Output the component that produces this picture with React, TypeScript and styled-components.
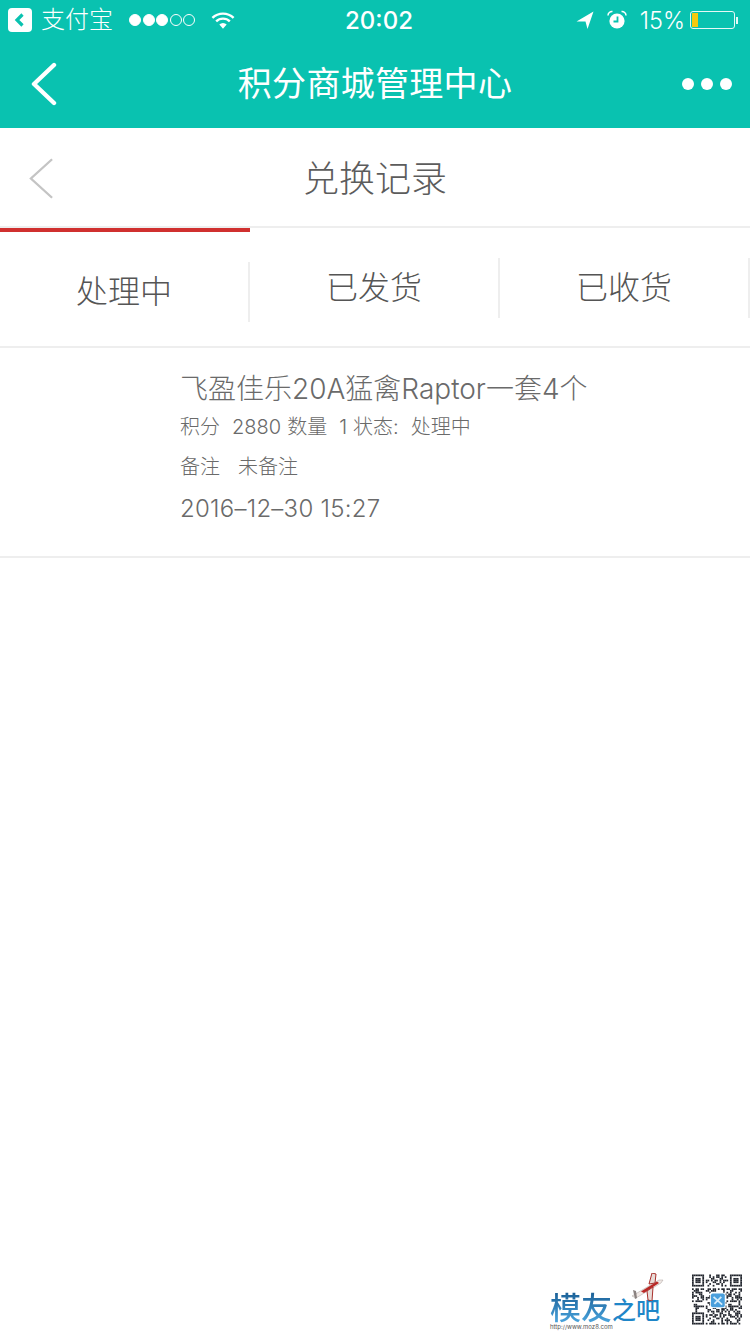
import React from "react";
import styled, { createGlobalStyle } from "styled-components";

const FONT = `Inter, "Noto Sans CJK SC", sans-serif`;

const QR_SIZE = 29;

// finder squares sit in three corners, the rest is pseudo random noise
const qrCell = (x: number, y: number) => {
    const inFinder = (ox: number, oy: number) => x >= ox && x < ox + 7 && y >= oy && y < oy + 7;
    const finderOn = (ox: number, oy: number) => {
        const dx = x - ox;
        const dy = y - oy;
        return dx === 0 || dx === 6 || dy === 0 || dy === 6 || (dx >= 2 && dx <= 4 && dy >= 2 && dy <= 4);
    };
    if (inFinder(0, 0)) return finderOn(0, 0);
    if (inFinder(QR_SIZE - 7, 0)) return finderOn(QR_SIZE - 7, 0);
    if (inFinder(0, QR_SIZE - 7)) return finderOn(0, QR_SIZE - 7);
    if (x === 7 || y === 7 || x === QR_SIZE - 8) {
        if (y < 8 || x < 8) return false;
    }
    return (x * 7 + y * 13 + ((x * y) % 5) * 11 + ((x ^ y) % 3)) % 5 < 2;
};

const QrCode = () => {
    const cells: React.ReactNode[] = [];
    for (let y = 0; y < QR_SIZE; y++) {
        for (let x = 0; x < QR_SIZE; x++) {
            if (qrCell(x, y)) cells.push(<rect key={x + "-" + y} x={x} y={y} width={1} height={1} fill="#20242c" />);
        }
    }
    return (
        <QrSvg viewBox={`0 0 ${QR_SIZE} ${QR_SIZE}`}>
            {cells}
            <rect x="10.5" y="10.5" width="9" height="9" fill="#fff" />
            <rect x="11" y="11" width="8" height="8" rx="1" fill="#4a9fdc" />
            <path d="M12.5 13 L17.5 17.5 M13 17 L17 13" stroke="#d6ecfa" strokeWidth="1" />
        </QrSvg>
    );
};

const Plane = () => (
    <PlaneSvg viewBox="0 0 32 28">
        <path d="M0 23 L27 7 L31 7 L29 10 L4 25 Z" fill="#f1e9e6" stroke="#a8a09c" strokeWidth="0.5" />
        <path d="M9 18.5 L25 8.5 L27 10 L12 20 Z" fill="#b92826" />
        <path d="M17 11 L20 0 L24 1 L23 10 Z" fill="#e8dcd8" stroke="#a8302c" strokeWidth="1" />
        <path d="M15 18 L16 27 L20 28 L21 14 Z" fill="#e8dcd8" stroke="#a8302c" strokeWidth="1" />
        <path d="M1 17 L3 26 L5 25 L4 18 Z" fill="#8a8280" />
    </PlaneSvg>
);

const tabs = ["处理中", "已发货", "已收货"];

export default function App() {
    return (
        <Page>
            <GlobalStyle />
            <TealHeader>
                <StatusBar>
                    <StatusLeft>
                        <BackBadge>
                            <svg width="24" height="24" viewBox="0 0 24 24">
                                <path d="M14.5 6.5 L9 12 L14.5 17.5" fill="none" stroke="#09c2b0" strokeWidth="3.2" />
                            </svg>
                        </BackBadge>
                        <CarrierName>支付宝</CarrierName>
                        <SignalDots>
                            {[1, 2, 3, 4, 5].map((n) => (
                                <SignalDot key={n} $on={n <= 3} />
                            ))}
                        </SignalDots>
                        <WifiIcon viewBox="0 0 26 20">
                            <path d="M1.5 7.2 A16.5 16.5 0 0 1 24.5 7.2" fill="none" stroke="#fff" strokeWidth="2.6" />
                            <path d="M5.6 11 A10.6 10.6 0 0 1 20.4 11" fill="none" stroke="#fff" strokeWidth="2.6" />
                            <path d="M9 14.4 A5.6 5.6 0 0 1 17 14.4 L13 19 Z" fill="#fff" />
                        </WifiIcon>
                    </StatusLeft>
                    <StatusTime>20:02</StatusTime>
                    <StatusRight>
                        <svg width="18" height="18" viewBox="0 0 18 18">
                            <path d="M17.5 0.5 L0.5 10.5 L9.5 10.5 L11.5 18 Z" fill="#fff" />
                        </svg>
                        <AlarmIcon viewBox="0 0 20 20">
                            <circle cx="10" cy="11" r="7.6" fill="#fff" />
                            <path d="M10.5 6.5 V11.5 H6.5" fill="none" stroke="#09c2b0" strokeWidth="1.8" />
                            <path d="M1 5.5 A4 4 0 0 1 5.5 1.5 M14.5 1.5 A4 4 0 0 1 19 5.5" fill="none" stroke="#fff" strokeWidth="1.5" />
                        </AlarmIcon>
                        <BatteryText>15%</BatteryText>
                        <Battery>
                            <BatteryLevel style={{ width: `${Math.round(15 * 0.42)}px` }} />
                        </Battery>
                        <BatteryTip />
                    </StatusRight>
                </StatusBar>
                <NavBar>
                    <NavBack viewBox="0 0 28 44">
                        <path d="M24 3 L4 22 L24 41" fill="none" stroke="#fff" strokeWidth="4.4" strokeLinecap="round" strokeLinejoin="round" />
                    </NavBack>
                    <NavTitle>积分商城管理中心</NavTitle>
                    <MoreDots>
                        <MoreDot />
                        <MoreDot />
                        <MoreDot />
                    </MoreDots>
                </NavBar>
            </TealHeader>

            <PageHeader>
                <PageBack viewBox="0 0 26 44">
                    <path d="M24 2 L2 22 L24 42" fill="none" stroke="#c4c4c4" strokeWidth="2.4" />
                </PageBack>
                <PageTitle>兑换记录</PageTitle>
            </PageHeader>

            <TabBar>
                {tabs.map((label, index) => (
                    <Tab key={label} $active={index === 0}>
                        {label}
                    </Tab>
                ))}
            </TabBar>

            <OrderRow>
                <OrderTitle>飞盈佳乐20A猛禽Raptor一套4个</OrderTitle>
                <OrderMeta>积分&nbsp; 2880 数量&nbsp; 1 状态:&nbsp; 处理中</OrderMeta>
                <OrderNote>备注&nbsp;&nbsp; 未备注</OrderNote>
                <OrderDate>2016–12–30 15:27</OrderDate>
            </OrderRow>

            <Watermark>
                <LogoBlock>
                    <Plane />
                    <LogoWords>
                        <LogoName>模友</LogoName>
                        <LogoSuffix>之吧</LogoSuffix>
                    </LogoWords>
                    <LogoUrl>http://www.moz8.com</LogoUrl>
                </LogoBlock>
                <QrCode />
            </Watermark>
        </Page>
    );
}

//style

const GlobalStyle = createGlobalStyle`
    html, body {
        margin: 0;
        padding: 0;
        background: #fff;
    }
`;

const Page = styled.div`
    position: relative;
    width: 750px;
    height: 1334px;
    overflow: hidden;
    background: #fff;
    font-family: ${FONT};
`;

const TealHeader = styled.header`
    height: 128px;
    background-color: #09c2b0;
    color: #fff;
`;

const StatusBar = styled.div`
    position: relative;
    height: 40px;
    display: flex;
    align-items: center;
    justify-content: space-between;
    padding: 0 12px 0 8px;
`;

const StatusLeft = styled.div`
    display: flex;
    align-items: center;
`;

const BackBadge = styled.div`
    width: 24px;
    height: 24px;
    border-radius: 4px;
    background: #fff;
    display: flex;
`;

const CarrierName = styled.span`
    margin-left: 9px;
    font-size: 24px;
    font-weight: 300;
    line-height: 30px;
`;

const SignalDots = styled.div`
    display: flex;
    gap: 1.5px;
    margin-left: 16px;
`;

const SignalDot = styled.i<{ $on: boolean }>`
    display: block;
    box-sizing: border-box;
    width: 12px;
    height: 12px;
    border-radius: 50%;
    border: 1px solid #fff;
    background: ${(p) => (p.$on ? "#fff" : "transparent")};
`;

const WifiIcon = styled.svg`
    width: 24px;
    height: 19px;
    margin-left: 16px;
`;

const StatusTime = styled.span`
    position: absolute;
    left: 8px;
    right: 0;
    text-align: center;
    font-size: 24px;
    font-weight: 500;
`;

const StatusRight = styled.div`
    display: flex;
    align-items: center;
`;

const AlarmIcon = styled.svg`
    width: 20px;
    height: 20px;
    margin-left: 13px;
`;

const BatteryText = styled.span`
    margin-left: 13px;
    font-size: 23.5px;
    font-weight: 300;
`;

const Battery = styled.div`
    box-sizing: border-box;
    width: 45px;
    height: 18px;
    margin-left: 5px;
    padding: 1px;
    border: 1px solid #e6f8f6;
    border-radius: 3px;
`;

const BatteryLevel = styled.div`
    height: 100%;
    background: #f5c90f;
`;

const BatteryTip = styled.div`
    width: 2px;
    height: 7px;
    margin-left: 1px;
    background: #e6f8f6;
`;

const NavBar = styled.div`
    height: 88px;
    display: grid;
    grid-template-columns: 1fr auto 1fr;
    align-items: center;
    padding: 0 18px 0 30px;
    box-sizing: border-box;
`;

const NavBack = styled.svg`
    width: 28px;
    height: 44px;
`;

const NavTitle = styled.h1`
    margin: 0 0 0 -12px;
    font-size: 34px;
    font-weight: 400;
    line-height: 48px;
    letter-spacing: 0.3px;
`;

const MoreDots = styled.div`
    display: flex;
    justify-content: flex-end;
    gap: 7px;
`;

const MoreDot = styled.i`
    display: block;
    width: 12px;
    height: 12px;
    border-radius: 50%;
    background: #fff;
`;

const PageHeader = styled.div`
    position: relative;
    height: 100px;
    box-sizing: border-box;
    border-bottom: 2px solid #eeeeee;
    padding-bottom: 3px;
    display: flex;
    align-items: center;
    justify-content: center;
`;

const PageBack = styled.svg`
    position: absolute;
    left: 29px;
    top: 29px;
    width: 25px;
    height: 43px;
`;

const PageTitle = styled.h2`
    margin: 0;
    font-size: 36px;
    font-weight: 300;
    color: #5c5c5c;
`;

const TabBar = styled.nav`
    height: 120px;
    box-sizing: border-box;
    border-bottom: 2px solid #eeeeee;
    display: flex;
`;

const Tab = styled.div<{ $active: boolean }>`
    position: relative;
    flex: 1;
    display: flex;
    align-items: center;
    justify-content: center;
    box-sizing: border-box;
    height: 100%;
    padding: 0 2px ${(p) => (p.$active ? "0" : "8px")} 0;
    font-size: 32px;
    font-weight: 300;
    color: #555;
    border-top: 4px solid ${(p) => (p.$active ? "#d0302f" : "transparent")};

    &::after {
        content: "";
        position: absolute;
        right: 0;
        top: ${(p) => (p.$active ? "30px" : "26px")};
        width: 2px;
        height: 60px;
        background: #eeeeee;
    }
`;

const OrderRow = styled.article`
    height: 210px;
    box-sizing: border-box;
    border-bottom: 2px solid #eeeeee;
    padding: 23px 0 0 180px;
    color: #6a6a6a;
`;

const OrderTitle = styled.div`
    font-size: 28px;
    font-weight: 300;
    line-height: 36px;
    white-space: nowrap;
`;

const OrderMeta = styled.div`
    margin-top: 6px;
    font-size: 20px;
    font-weight: 300;
    line-height: 28px;
    white-space: nowrap;
    word-spacing: 0.4px;
`;

const OrderNote = styled(OrderMeta)`
    margin-top: 12px;
`;

const OrderDate = styled.div`
    margin-top: 13px;
    font-size: 24px;
    font-weight: 300;
    line-height: 30px;
    letter-spacing: 0.25px;
`;

const Watermark = styled.footer`
    position: absolute;
    right: 8px;
    top: 1274px;
    display: flex;
    gap: 28px;
`;

const LogoBlock = styled.div`
    position: relative;
    width: 114px;
    padding-top: 18px;
`;

const PlaneSvg = styled.svg`
    position: absolute;
    left: 82px;
    top: -1px;
    width: 32px;
    height: 28px;
`;

const LogoWords = styled.div`
    display: flex;
    align-items: flex-end;
    height: 31px;
`;

const LogoName = styled.span`
    font-size: 31px;
    font-weight: 500;
    line-height: 31px;
    background: linear-gradient(#1a5f96, #4aa5de);
    -webkit-background-clip: text;
    background-clip: text;
    color: transparent;
`;

const LogoSuffix = styled.span`
    font-size: 24px;
    font-weight: 500;
    line-height: 24px;
    color: #1f86c8;
`;

const LogoUrl = styled.div`
    font-size: 6px;
    line-height: 8px;
    color: #555;
    white-space: nowrap;
`;

const QrSvg = styled.svg`
    width: 50px;
    height: 51px;
    display: block;
    filter: blur(0.35px);
`;
